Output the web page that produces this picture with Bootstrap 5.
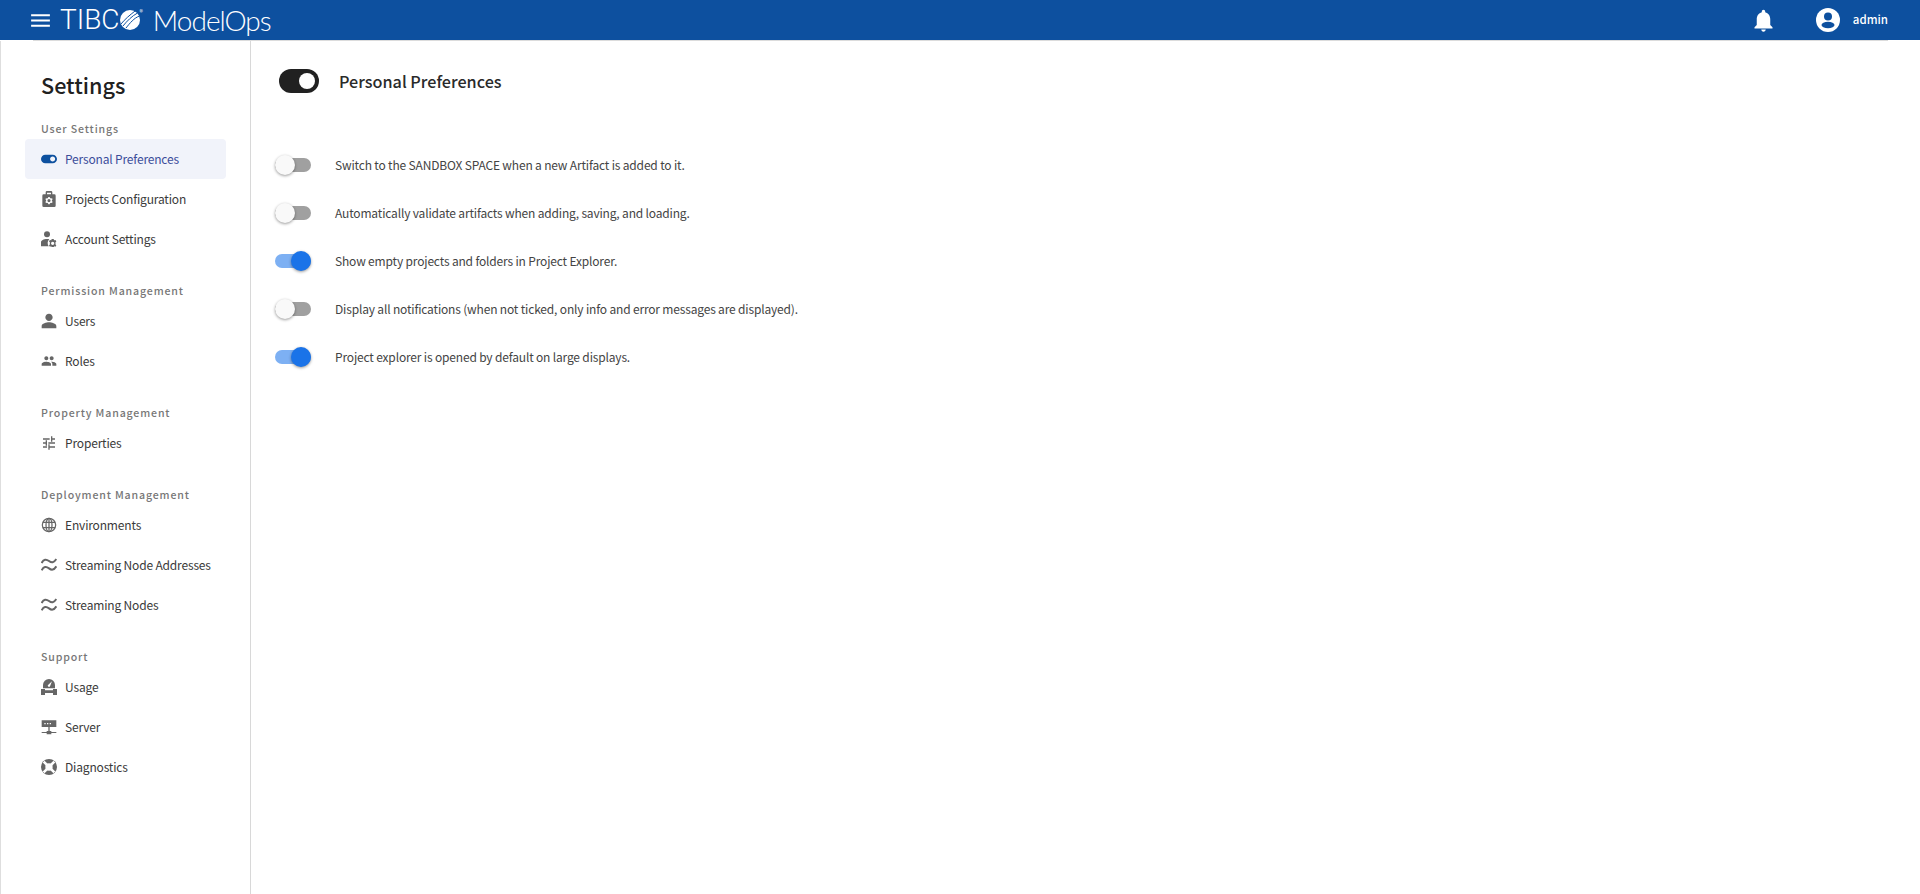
<!DOCTYPE html>
<html lang="en">
<head>
    <meta charset="UTF-8">
    <meta name="viewport" content="width=device-width, initial-scale=1.0">
    <title>TIBCO ModelOps - Settings</title>
    <link href="https://cdn.jsdelivr.net/npm/bootstrap@5.3.0/dist/css/bootstrap.min.css" rel="stylesheet">
    <style>
        html, body { height: 100%; }
        body {
            font-family: "Noto Sans CJK SC", "Liberation Sans", sans-serif;
            color: #333;
            background: #fff;
            overflow: hidden;
        }
        .top-bar { height: 40px; background: #0d509f; color: #fff; padding: 0 32px 0 28px; }
        .menu-btn { width: 25px; height: 25px; fill: #fff; margin-right: 7px; }
        .logo-word { font-family: "Roboto", sans-serif; font-size: 28px; font-weight: 300; letter-spacing: 0; line-height: 40px; }
        .logo-ball { width: 20px; height: 20px; margin-left: 0; }
        .logo-reg { font-size: 7px; line-height: 1; align-self: flex-start; margin: 9px 0 0 0; }
        .product-name { font-family: "Lato", sans-serif; font-weight: 300; font-size: 28px; letter-spacing: -1px; line-height: 40px; margin-left: 10px; }
        .bell-icon { width: 27px; height: 27px; fill: #fff; }
        .user-icon { width: 26px; height: 26px; margin-left: 38px; }
        .user-name { font-size: 11.5px; font-weight: 500; margin-left: 12px; letter-spacing: 0; }
        .top-rule { height: 1px; background: #dcdcdc; margin: 0 32px 0 33px; }
        .page-body { height: calc(100% - 41px); }
        .side-panel { width: 251px; flex: none; border-left: 1px solid #dedede; border-right: 1px solid #d8d8d8; padding: 26px 24px 0 24px; }
        .side-title { font-size: 21.6px; font-weight: 500; line-height: 36px; color: #212121; margin: 0 0 15.5px 16px; }
        .side-label { font-size: 10.6px; font-weight: 500; letter-spacing: .85px; line-height: 20px; color: #777; margin: 0 0 0 16px; }
        .side-group { margin-bottom: 22.1px; }
        .side-group .nav-link {
            height: 40px; padding: 0 0 0 16px; border-radius: 4px;
            font-size: 12px; letter-spacing: -.17px; color: #3a3a3a; display: flex; align-items: center; width: 201px;
        }
        .side-group .nav-link.active { background: #f1f3fa; color: #3c4d9a; }
        .side-group .nav-link svg { width: 16px; height: 16px; flex: none; margin-right: 8px; fill: #666; }
        .side-group .nav-link.active svg { fill: #0d509f; }
        .pref-panel { padding: 28px 0 0 28px; }
        .pref-head { height: 24px; margin-bottom: 47.5px; }
        .big-switch { width: 40px; height: 24px; background: #212121; border-radius: 12px; padding: 4px 4px 4px 20px; margin-right: 20px; }
        .big-switch span { display: block; width: 16px; height: 16px; background: #fff; border-radius: 50%; }
        .pref-title { font-size: 16.2px; font-weight: 500; color: #2a2a2a; margin: 0; line-height: 24px; }
        .pref-row { height: 48.2px; margin-left: -4px; font-size: 12px; letter-spacing: -.17px; color: #444; }
        .mini-switch { position: relative; width: 36px; height: 14px; border-radius: 7px; background: #a0a0a0; margin-right: 24px; flex: none; }
        .mini-switch span { position: absolute; top: -3px; left: 0; width: 20px; height: 20px; border-radius: 50%; background: #f9f9f9; box-shadow: 0 1px 3px rgba(0,0,0,.4); }
        .mini-switch.is-on { background: #7db0f3; }
        .mini-switch.is-on span { left: 16px; background: #1a73e8; }
    </style>
</head>
<body>

<!-- top bar -->
<header class="top-bar d-flex align-items-center">
    <svg class="menu-btn" viewBox="0 0 24 24"><path d="M3 18h18v-2H3v2zm0-5h18v-2H3v2zm0-7v2h18V6H3z"/></svg>
    <span class="logo-word">TIBC</span>
    <svg class="logo-ball" viewBox="0 0 20 20">
        <circle cx="10" cy="10" r="10" fill="#fff"/>
        <path d="M1 14C5 9 10 5 15 1M3 16C7 11 12 6 17.500 3M6 18C10 13 14 8 19.500 6" fill="none" stroke="#0d509f" stroke-width="1"/>
    </svg>
    <span class="logo-reg">®</span>
    <span class="product-name">ModelOps</span>
    <div class="ms-auto d-flex align-items-center">
        <svg class="bell-icon" viewBox="0 0 24 24"><path d="M12 22c1.100 0 2-.9 2-2h-4c0 1.100.9 2 2 2zm6-6v-5c0-3.070-1.630-5.640-4.500-6.320V4c0-.83-.67-1.500-1.500-1.500s-1.500.67-1.500 1.500v.68C7.640 5.360 6 7.920 6 11v5l-2 2v1h16v-1l-2-2z"/></svg>
        <svg class="user-icon" viewBox="0 0 26 26">
            <circle cx="13" cy="13" r="12" fill="#fff"/>
            <circle cx="13" cy="9.500" r="4" fill="#0d509f"/>
            <ellipse cx="13" cy="18" rx="6.500" ry="3.200" fill="#0d509f"/>
        </svg>
        <span class="user-name">admin</span>
    </div>
</header>
<div class="top-rule"></div>

<div class="page-body d-flex">
    <!-- settings sidebar -->
    <aside class="side-panel">
        <h1 class="side-title">Settings</h1>

        <div class="side-group">
            <p class="side-label">User Settings</p>
            <nav class="nav flex-column">
                <a class="nav-link active" href="#"><svg viewBox="1 1 22 22"><path d="M17 6H7c-3.300 0-6 2.700-6 6s2.700 6 6 6h10c3.300 0 6-2.700 6-6s-2.700-6-6-6zm0 9.500c-1.900 0-3.500-1.600-3.500-3.500s1.600-3.500 3.500-3.500 3.500 1.600 3.500 3.500-1.600 3.500-3.500 3.500z"/></svg>Personal Preferences</a>
                <a class="nav-link" href="#"><svg viewBox="0 0 24 24"><path fill-rule="evenodd" d="M9 0h6a2 2 0 0 1 2 2v3h3a2 2 0 0 1 2 2v15a2 2 0 0 1-2 2H4a2 2 0 0 1-2-2V7a2 2 0 0 1 2-2h3V2a2 2 0 0 1 2-2zm0 2.500V5h6V2.500H9zM11 9l-.5 1.500-1.500.8-1.500-.5-1 1.700 1.200 1-.1.9.1.900-1.200 1 1 1.700 1.500-.5 1.500.8.500 1.500h2l.5-1.500 1.500-.8 1.500.5 1-1.700-1.200-1 .1-.9-.1-.9 1.200-1-1-1.700-1.500.5-1.500-.8L13 9h-2zm1 3a2.400 2.400 0 1 1 0 4.800 2.400 2.400 0 0 1 0-4.800z"/></svg>Projects Configuration</a>
                <a class="nav-link" href="#"><svg viewBox="0 0 24 24"><circle cx="9" cy="5" r="4.500"/><path d="M0 23v-6c0-3 4-5 9-5 1.500 0 2.500.2 3.500.5-1.500 1.500-2.500 3.500-2.500 5.500 0 1.800.5 3.500 1.500 5H0z"/><path fill-rule="evenodd" d="M19 12l.6 2 2.100-.6 1.300 2.200-1.500 1.500.4 1.400-.4 1.400 1.500 1.500-1.300 2.200-2.100-.6-.6 2h-3l-.6-2-2.100.6-1.300-2.200 1.500-1.500-.4-1.400.4-1.400-1.500-1.500 1.300-2.200 2.100.6.600-2h3zm-1.500 4a2.500 2.500 0 1 0 0 5 2.500 2.500 0 0 0 0-5z"/></svg>Account Settings</a>
            </nav>
        </div>

        <div class="side-group">
            <p class="side-label">Permission Management</p>
            <nav class="nav flex-column">
                <a class="nav-link" href="#"><svg viewBox="0 0 24 24"><path d="M12 12c3 0 5.500-2.500 5.500-5.500S15 1 12 1 6.500 3.500 6.500 6.500 9 12 12 12zm0 2c-3.700 0-11 1.800-11 5.500V23h22v-3.500C23 15.800 15.700 14 12 14z"/></svg>Users</a>
                <a class="nav-link" href="#"><svg viewBox="0 0 24 24"><path d="M16 11c1.660 0 2.990-1.340 2.990-3S17.660 5 16 5c-1.660 0-3 1.340-3 3s1.340 3 3 3zm-8 0c1.660 0 2.990-1.340 2.990-3S9.660 5 8 5C6.340 5 5 6.340 5 8s1.340 3 3 3zm0 2c-2.330 0-7 1.170-7 3.500V19h14v-2.500c0-2.330-4.670-3.500-7-3.500zm8 0c-.29 0-.62.02-.97.05 1.160.84 1.970 1.970 1.970 3.450V19h6v-2.500c0-2.330-4.670-3.500-7-3.500z"/></svg>Roles</a>
            </nav>
        </div>

        <div class="side-group">
            <p class="side-label">Property Management</p>
            <nav class="nav flex-column">
                <a class="nav-link" href="#"><svg viewBox="0 0 24 24"><path d="M3 5h10v2H3zM15 2h2v8h-2zM17 5h4v2h-4zM3 11h4v2H3zM7 8h2v8H7zM11 11h10v2H11zM3 17h6v2H3zM11 14h2v8h-2zM13 17h8v2h-8z"/></svg>Properties</a>
            </nav>
        </div>

        <div class="side-group">
            <p class="side-label">Deployment Management</p>
            <nav class="nav flex-column">
                <a class="nav-link" href="#"><svg viewBox="0 0 24 24"><g fill="none" stroke="#666" stroke-width="1.900"><circle cx="12" cy="12" r="10"/><ellipse cx="12" cy="12" rx="4.500" ry="10"/><path d="M3 8h18M3 16h18M12 2v20"/></g></svg>Environments</a>
                <a class="nav-link" href="#"><svg viewBox="0 0 24 24"><path d="M1 9c3-6 7-6 11-3s7 3 11-3M1 20c3-6 7-6 11-3s7 3 11-3" fill="none" stroke="#666" stroke-width="3"/></svg>Streaming Node Addresses</a>
                <a class="nav-link" href="#"><svg viewBox="0 0 24 24"><path d="M1 9c3-6 7-6 11-3s7 3 11-3M1 20c3-6 7-6 11-3s7 3 11-3" fill="none" stroke="#666" stroke-width="3"/></svg>Streaming Nodes</a>
            </nav>
        </div>

        <div class="side-group">
            <p class="side-label">Support</p>
            <nav class="nav flex-column">
                <a class="nav-link" href="#"><svg viewBox="0 0 24 24"><path fill-rule="evenodd" d="M12 0a9 9 0 0 1 9 9v5H3V9a9 9 0 0 1 9-9zm4.500 3.500L11 8.500a1.800 1.800 0 1 0 2.500 2.500l3-7.500zM0 15h6v2h12v-2h6v9h-6v-3H6v3H0v-9z"/></svg>Usage</a>
                <a class="nav-link" href="#"><svg viewBox="0 0 24 24"><path fill-rule="evenodd" d="M1 2h22v10H1V2zm4 4v2h2V6H5zm4 0v2h2V6H9zm4 0v2h2V6h-2zM11 12h2v6h2.500v1.500H23v1.500h-7.500v2h-7v-2H1v-1.500h7.500V18H11v-6z"/></svg>Server</a>
                <a class="nav-link" href="#"><svg viewBox="0 0 24 24"><circle cx="12" cy="12" r="12"/><path d="M4 4l16 16M20 4L4 20" stroke="#fff" stroke-width="4"/><circle cx="12" cy="12" r="5.500" fill="#fff"/></svg>Diagnostics</a>
            </nav>
        </div>
    </aside>

    <!-- preferences -->
    <main class="pref-panel flex-grow-1">
        <div class="pref-head d-flex align-items-center">
            <div class="big-switch"><span></span></div>
            <h2 class="pref-title">Personal Preferences</h2>
        </div>
        <div id="prefRows"></div>
    </main>
</div>

<script>
// preference rows
const prefs = [
    { text: "Switch to the SANDBOX SPACE when a new Artifact is added to it.", on: false },
    { text: "Automatically validate artifacts when adding, saving, and loading.", on: false },
    { text: "Show empty projects and folders in Project Explorer.", on: true },
    { text: "Display all notifications (when not ticked, only info and error messages are displayed).", on: false },
    { text: "Project explorer is opened by default on large displays.", on: true }
];

const rows = document.getElementById("prefRows");
prefs.forEach(p => {
    const row = document.createElement("div");
    row.className = "pref-row d-flex align-items-center";
    row.innerHTML = `<div class="mini-switch ${p.on ? "is-on" : ""}"><span></span></div><div>${p.text}</div>`;
    rows.appendChild(row);
});
</script>
<script src="https://cdn.jsdelivr.net/npm/bootstrap@5.3.0/dist/js/bootstrap.bundle.min.js"></script>
</body>
</html>
